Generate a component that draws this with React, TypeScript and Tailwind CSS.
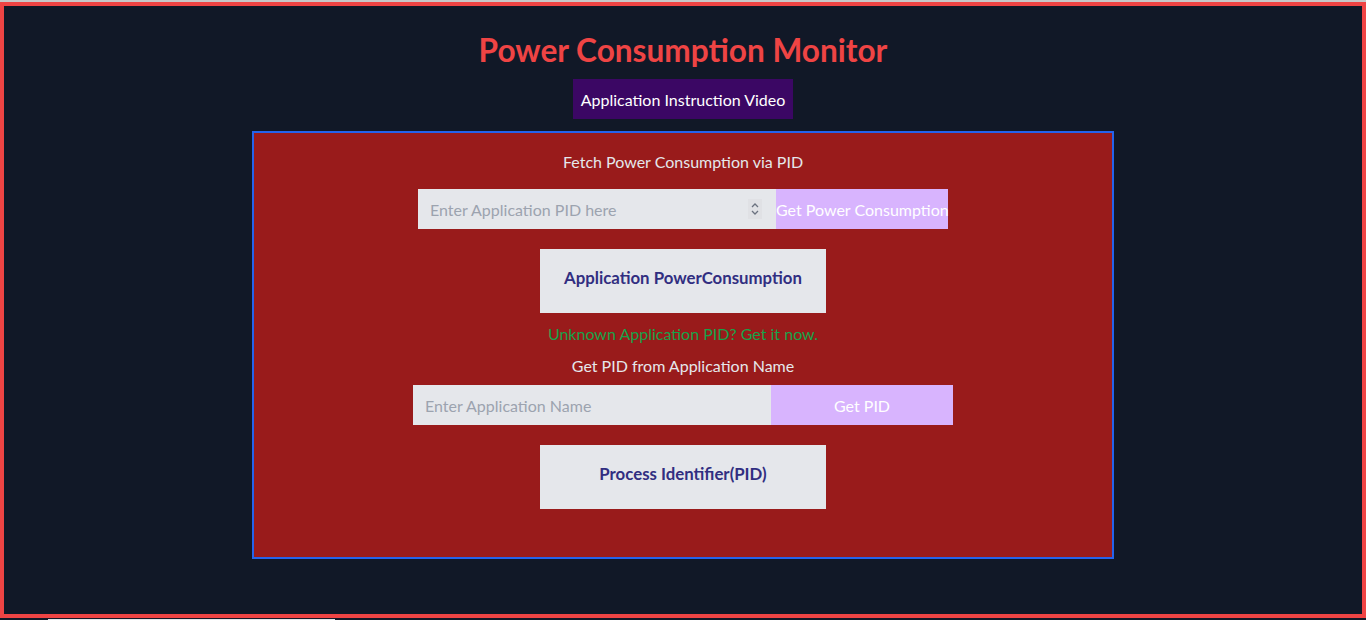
import { useState } from "react";

function Spinner() {
    return (
        <span className="pointer-events-none absolute right-[14px] top-1/2 flex h-[20px] w-[14px] -translate-y-1/2 items-center justify-center bg-[#e0e1e5]">
            <svg width="10" height="16" viewBox="0 0 10 16" fill="none" stroke="#6b7280" strokeWidth="1.3">
                <path d="M2 6 L5 3 L8 6" />
                <path d="M2 10 L5 13 L8 10" />
            </svg>
        </span>
    );
}

export default function App() {
    const [pid, setPid] = useState("");
    const [name, setName] = useState("");

    return (
        <div className="min-h-[620px] bg-[#111827]" style={{ fontFamily: "Lato, 'Open Sans', sans-serif" }}>
            <div className="h-[2px] bg-[#c8c8c8]" />
            <div className="flex h-[616px] flex-col items-center border-4 border-[#ef4444] bg-[#111827]">
                <h1 className="mt-[26px] text-[31.6px] leading-9 font-bold text-[#ef4444]">Power Consumption Monitor</h1>
                <button className="mt-[11px] h-[40px] bg-[#3b0764] px-2 pt-[1px] text-white">Application Instruction Video</button>

                <div className="mt-[12px] flex w-[862px] flex-col items-center border-2 border-[#2563eb] bg-[#991b1b] pt-[17px] pb-12">
                    <p className="text-[#e5e7eb]">Fetch Power Consumption via PID</p>
                    <div className="mt-[15px] flex">
                        <div className="relative">
                            <input
                                type="text"
                                value={pid}
                                onChange={(e) => setPid(e.target.value)}
                                placeholder="Enter Application PID here"
                                className="h-[40px] w-[358px] bg-[#e5e7eb] px-3 text-gray-700 outline-none placeholder:text-[#9ca3af]"
                            />
                            <Spinner />
                        </div>
                        <button className="h-[40px] w-[172px] whitespace-nowrap bg-[#d8b4fe] pt-[1px] text-white">Get Power Consumption</button>
                    </div>
                    <button className="mt-5 h-[64px] w-[286px] bg-[#e5e7eb] pb-[6px] text-[16.8px] font-bold text-[#312e81]">Application PowerConsumption</button>

                    <p className="mt-[9px] text-[#16a34a]">Unknown Application PID? Get it now.</p>
                    <p className="mt-[8px] text-[#e5e7eb]">Get PID from Application Name</p>
                    <div className="mt-[7px] flex">
                        <input
                            type="text"
                            value={name}
                            onChange={(e) => setName(e.target.value)}
                            placeholder="Enter Application Name"
                            className="h-[40px] w-[358px] bg-[#e5e7eb] px-3 text-gray-700 outline-none placeholder:text-[#9ca3af]"
                        />
                        <button className="h-[40px] w-[182px] bg-[#d8b4fe] pt-[1px] text-white">Get PID</button>
                    </div>
                    <button className="mt-5 h-[64px] w-[286px] bg-[#e5e7eb] pb-[6px] text-[16.8px] font-bold text-[#312e81]">Process Identifier(PID)</button>
                </div>
            </div>
            <div className="ml-[48px] mt-[1px] h-[2px] w-[287px] bg-[#e5e7eb]" />
        </div>
    );
}
